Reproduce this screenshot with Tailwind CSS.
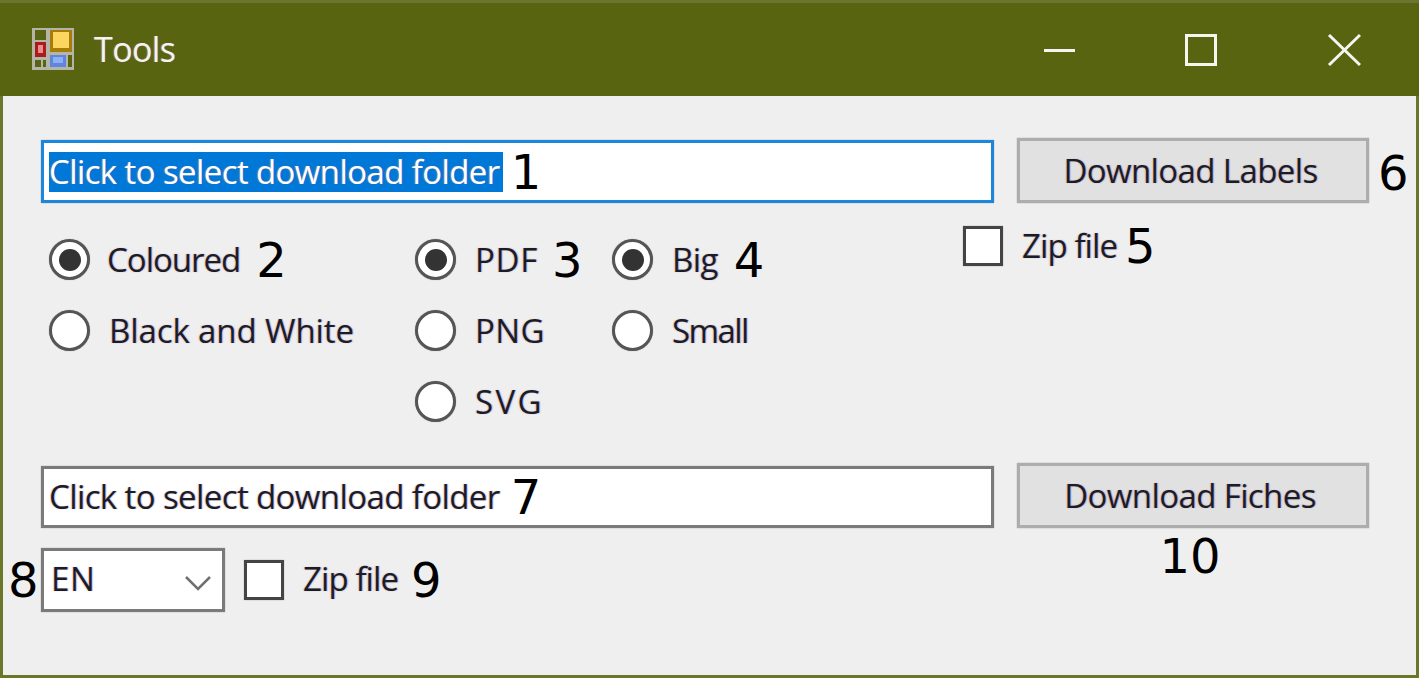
<!DOCTYPE html>
<html lang="en">

<head>
    <meta charset="UTF-8">
    <meta name="viewport" content="width=device-width, initial-scale=1.0">
    <script src="https://cdn.jsdelivr.net/npm/@tailwindcss/browser@4"></script>
    <title>Tools</title>
</head>

<body class="w-[1419px] h-[678px] overflow-hidden bg-[#efefef]">
    <div class="h-[678px] flex flex-col border-[3px] border-t-0 border-[#6b7728] font-['Open_Sans',sans-serif] text-[33px] text-[#1c1c28] tracking-[-0.6px] [text-shadow:-1px_0_1px_rgba(224,150,60,.4),1px_0_1px_rgba(60,90,220,.4)]">
        <!-- Title bar -->
        <div class="h-[96px] -mx-[3px] shrink-0 flex items-center bg-[#586410] border-t-[3px] border-[#6b7530]">
            <svg class="ml-[31px] mb-[2px] w-[44px] h-[44px] blur-[0.6px]" viewBox="0 0 44 44">
                <rect x="1" y="1" width="42" height="42" fill="#b4b4a8" />
                <rect x="4" y="3" width="11" height="10" fill="#586410" />
                <rect x="19" y="3" width="22" height="22" fill="#a87c08" />
                <rect x="22" y="5" width="16" height="16" fill="#fbd660" />
                <rect x="4" y="15" width="11" height="15" fill="#a81c1c" />
                <rect x="7" y="18" width="5" height="8" fill="#ee8a8a" />
                <rect x="19" y="28" width="16" height="12" fill="#5f86dc" />
                <rect x="22" y="30" width="10" height="6" fill="#8cb0f4" />
                <rect x="4" y="33" width="6" height="7" fill="#586410" />
                <rect x="12" y="33" width="3" height="7" fill="#586410" />
                <rect x="37" y="28" width="4" height="12" fill="#586410" />
            </svg>
            <span class="ml-[19px] mb-[1px] text-[#f4f4ee] text-[34px]">Tools</span>
            <svg class="ml-auto mr-[58px] w-[318px] h-[34px]" viewBox="0 0 318 34" fill="none" stroke="#f6f6f0" stroke-width="3">
                <path d="M1 17.500H32" />
                <rect x="143.500" y="2.500" width="29" height="29" />
                <path d="M286 2L317 32M317 2L286 32" />
            </svg>
        </div>

        <!-- Label download row -->
        <div class="flex items-start pl-[38px] pt-[42px]">
            <div class="mt-[2px] w-[953px] h-[63px] flex items-center pl-[5px] bg-white border-[3px] border-[#1c86dc] shadow-[0_0_1px_#0006]">
                <span class="bg-[#0078d7] text-white h-[40px] leading-[40px] pr-[3px] whitespace-nowrap">Click to select download folder</span>
                <span class="ml-[8px] font-['DejaVu_Sans',sans-serif] text-[48px] leading-[56px] text-black tracking-normal [text-shadow:none]">1</span>
            </div>
            <div class="ml-[23px] w-[352px] h-[65px] flex items-center justify-center pr-[5px] bg-[#e1e1e1] border-[3px] border-[#adadad] shadow-[0_0_1px_#0006]">Download Labels</div>
            <span class="ml-[9px] mt-[7px] font-['DejaVu_Sans',sans-serif] text-[48px] leading-[56px] text-black tracking-normal [text-shadow:none]">6</span>
        </div>

        <!-- Options -->
        <div class="flex items-start pl-[46px] mt-[21px] h-[213px]">
            <div class="w-[366px] flex flex-col">
                <div class="h-[71px] flex items-center">
                    <div class="w-[41px] h-[41px] flex items-center justify-center rounded-full bg-white border-[3px] border-[#555] shadow-[0_0_1px_#0006]"><div class="w-[22px] h-[22px] rounded-full bg-[#333]"></div></div>
                    <span class="ml-[17px] tracking-[-1px]">Coloured</span>
                    <span class="ml-[16px] font-['DejaVu_Sans',sans-serif] text-[48px] leading-[56px] text-black tracking-normal [text-shadow:none]">2</span>
                </div>
                <div class="h-[71px] flex items-center">
                    <div class="w-[41px] h-[41px] rounded-full bg-white border-[3px] border-[#555] shadow-[0_0_1px_#0006]"></div>
                    <span class="ml-[19px] tracking-[-0.1px]">Black and White</span>
                </div>
            </div>
            <div class="w-[197px] flex flex-col">
                <div class="h-[71px] flex items-center">
                    <div class="w-[41px] h-[41px] flex items-center justify-center rounded-full bg-white border-[3px] border-[#555] shadow-[0_0_1px_#0006]"><div class="w-[22px] h-[22px] rounded-full bg-[#333]"></div></div>
                    <span class="ml-[19px] tracking-[0.7px]">PDF</span>
                    <span class="ml-[14px] font-['DejaVu_Sans',sans-serif] text-[48px] leading-[56px] text-black tracking-normal [text-shadow:none]">3</span>
                </div>
                <div class="h-[71px] flex items-center">
                    <div class="w-[41px] h-[41px] rounded-full bg-white border-[3px] border-[#555] shadow-[0_0_1px_#0006]"></div>
                    <span class="ml-[19px] tracking-[0.4px]">PNG</span>
                </div>
                <div class="h-[71px] flex items-center">
                    <div class="w-[41px] h-[41px] rounded-full bg-white border-[3px] border-[#555] shadow-[0_0_1px_#0006]"></div>
                    <span class="ml-[19px] tracking-[2.4px]">SVG</span>
                </div>
            </div>
            <div class="w-[351px] flex flex-col">
                <div class="h-[71px] flex items-center">
                    <div class="w-[41px] h-[41px] flex items-center justify-center rounded-full bg-white border-[3px] border-[#555] shadow-[0_0_1px_#0006]"><div class="w-[22px] h-[22px] rounded-full bg-[#333]"></div></div>
                    <span class="ml-[19px]">Big</span>
                    <span class="ml-[16px] font-['DejaVu_Sans',sans-serif] text-[48px] leading-[56px] text-black tracking-normal [text-shadow:none]">4</span>
                </div>
                <div class="h-[71px] flex items-center">
                    <div class="w-[41px] h-[41px] rounded-full bg-white border-[3px] border-[#555] shadow-[0_0_1px_#0006]"></div>
                    <span class="ml-[19px] tracking-[-1.6px]">Small</span>
                </div>
            </div>
            <div class="h-[48px] mt-[-2px] flex items-center">
                <div class="w-[40px] h-[40px] bg-white border-[3px] border-[#444] shadow-[0_0_1px_#0006]"></div>
                <span class="ml-[19px] tracking-[-0.9px]">Zip file</span>
                <span class="ml-[8px] font-['DejaVu_Sans',sans-serif] text-[48px] leading-[56px] text-black tracking-normal [text-shadow:none]">5</span>
            </div>
        </div>

        <!-- Fiches download row -->
        <div class="flex items-start pl-[38px] mt-[26px]">
            <div class="mt-[3px] w-[953px] h-[62px] flex items-center pl-[5px] bg-white border-[3px] border-[#7a7a7a] shadow-[0_0_1px_#0006]">
                <span class="whitespace-nowrap pr-[3px]">Click to select download folder</span>
                <span class="ml-[8px] font-['DejaVu_Sans',sans-serif] text-[48px] leading-[56px] text-black tracking-normal [text-shadow:none]">7</span>
            </div>
            <div class="ml-[23px] w-[352px] h-[65px] flex items-center justify-center pr-[6px] bg-[#e1e1e1] border-[3px] border-[#adadad] shadow-[0_0_1px_#0006]">Download Fiches</div>
        </div>

        <!-- Language row -->
        <div class="flex items-start justify-between pl-[5px] pr-[48px] mt-[20px]">
            <div class="flex items-center">
                <span class="w-[33px] font-['DejaVu_Sans',sans-serif] text-[48px] leading-[56px] text-black tracking-normal [text-shadow:none]">8</span>
                <div class="w-[184px] h-[64px] flex items-center pl-[7px] bg-white border-[3px] border-[#7a7a7a] shadow-[0_0_1px_#0006]">
                    <span class="mb-[3px] tracking-[0.6px]">EN</span>
                    <svg class="ml-auto mr-[11px] mt-[5px] w-[26px] h-[16px]" viewBox="0 0 26 16" fill="none" stroke="#707070" stroke-width="2.500"><path d="M1 2L13 14L25 2" /></svg>
                </div>
                <div class="ml-[19px] w-[40px] h-[40px] bg-white border-[3px] border-[#444] shadow-[0_0_1px_#0006]"></div>
                <span class="ml-[19px] mb-[3px] tracking-[-0.9px]">Zip file</span>
                <span class="ml-[13px] font-['DejaVu_Sans',sans-serif] text-[48px] leading-[56px] text-black tracking-normal [text-shadow:none]">9</span>
            </div>
            <div class="w-[356px] mt-[-20px] text-center font-['DejaVu_Sans',sans-serif] text-[48px] leading-[56px] text-black tracking-normal [text-shadow:none]">10</div>
        </div>
    </div>
</body>

</html>
